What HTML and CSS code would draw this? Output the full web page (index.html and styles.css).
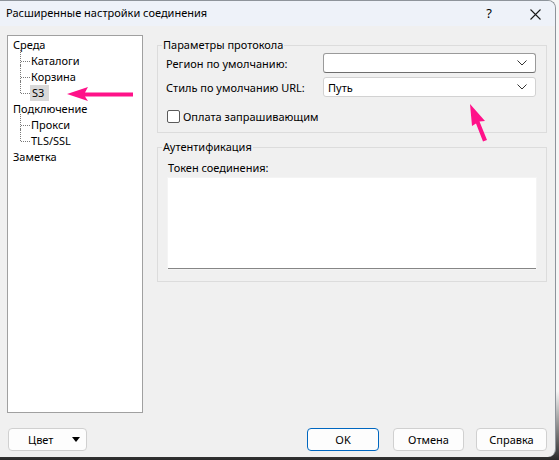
FILE: index.html
```html
<!DOCTYPE html>
<html>
<head>
    <title>Расширенные настройки соединения</title>
    <meta charset="UTF-8">
<link rel="stylesheet" href="styles.css">
</head>
<body>
<div class="window">
    <div class="titlebar">
        <span class="title">Расширенные настройки соединения</span>
        <span class="help">?</span>
        <svg class="close" width="11" height="11" viewBox="0 0 11 11">
            <path d="M0.5 0.5 L10.5 10.5 M10.5 0.5 L0.5 10.5" stroke="#1a1a1a" stroke-width="1.1" fill="none"/>
        </svg>
    </div>

    <div class="content">
        <div class="main">
            <!-- left tree -->
            <div class="tree">
                <ul class="tree-root">
                    <li><span class="node">Среда</span>
                        <ul class="tree-sub">
                            <li><span class="node">Каталоги</span></li>
                            <li><span class="node">Корзина</span></li>
                            <li><span class="node selected">S3</span></li>
                        </ul>
                    </li>
                    <li><span class="node">Подключение</span>
                        <ul class="tree-sub">
                            <li><span class="node">Прокси</span></li>
                            <li><span class="node">TLS/SSL</span></li>
                        </ul>
                    </li>
                    <li><span class="node">Заметка</span></li>
                </ul>
            </div>

            <!-- right panels -->
            <div class="panels">
                <fieldset class="group">
                    <legend>Параметры протокола</legend>
                    <div class="group-body protocol-body">
                        <div class="row">
                            <span class="label">Регион по умолчанию:</span>
                            <div class="combo combo-active">
                                <span class="combo-text"></span>
                                <svg class="chevron" width="10" height="6" viewBox="0 0 10 6"><path d="M0.5 0.5 L5 5 L9.5 0.5" stroke="#333" fill="none"/></svg>
                            </div>
                        </div>
                        <div class="row">
                            <span class="label">Стиль по умолчанию URL:</span>
                            <div class="combo">
                                <span class="combo-text">Путь</span>
                                <svg class="chevron" width="10" height="6" viewBox="0 0 10 6"><path d="M0.5 0.5 L5 5 L9.5 0.5" stroke="#333" fill="none"/></svg>
                            </div>
                        </div>
                        <label class="check-row">
                            <span class="checkbox"></span>
                            <span>Оплата запрашивающим</span>
                        </label>
                    </div>
                </fieldset>

                <fieldset class="group">
                    <legend>Аутентификация</legend>
                    <div class="group-body auth-body">
                        <div class="field-label">Токен соединения:</div>
                        <div class="textarea"></div>
                    </div>
                </fieldset>
            </div>
        </div>

        <div class="footer">
            <button class="btn btn-color">Цвет <span class="caret"></span></button>
            <div class="footer-right">
                <button class="btn btn-default">OK</button>
                <button class="btn">Отмена</button>
                <button class="btn">Справка</button>
            </div>
        </div>
    </div>

    <!-- annotation arrows -->
    <svg class="arrow arrow-s3" width="70" height="16" viewBox="0 0 70 16">
        <polygon points="0,7 21,0 18,5.5 66,5.5 66,9.5 18,9.5 21,14" fill="#ff1289"/>
    </svg>
    <svg class="arrow arrow-url" width="22" height="42" viewBox="0 0 22 42">
        <polygon points="1,1 16,18 10.5,18.5 18,37 14,38.5 7,20.5 3,23" fill="#ff1289"/>
    </svg>
</div>
</body>
</html>
```

FILE: styles.css
```css
/* Page */
html, body {
  margin: 0;
  padding: 0;
}

body {
  width: 559px;
  height: 460px;
  background: linear-gradient(to bottom, #f6f6f6 0, #f6f6f6 85%, #2a2a2a 100%);
  font-family: "Noto Sans", "Open Sans", sans-serif;
  font-size: 11px;
  color: #000;
  overflow: hidden;
}

/* Window frame */
.window {
  position: relative;
  width: 555px;
  height: 456px;
  background-color: #f0f0f0;
  border-top: 1px solid #8e949b;
  border-right: 1px solid #8e949b;
  border-radius: 0 8px 8px 0;
  display: flex;
  flex-direction: column;
  overflow: hidden;
}

/* Title bar */
.titlebar {
  height: 25px;
  background-color: #eef2f9;
  display: flex;
  align-items: center;
  padding-left: 6px;
}

.title {
  flex: 1;
  line-height: 16px;
  padding-bottom: 1px;
}

.help {
  font-size: 13px;
  margin-right: 38px;
  padding-bottom: 1px;
}

.close {
  margin-right: 14px;
  margin-top: 1px;
}

/* Content */
.content {
  flex: 1;
  display: flex;
  flex-direction: column;
  padding: 9px 8px 6px 7px;
}

.main {
  display: flex;
  gap: 14px;
  height: 378px;
}

/* Tree */
.tree {
  width: 134px;
  background-color: #fff;
  border: 1px solid #a0a0a0;
  padding-top: 1px;
}

.tree ul {
  list-style: none;
  margin: 0;
  padding: 0;
}

.tree li {
  line-height: 16px;
}

.tree-root > li > .node {
  margin-left: 4px;
}

.node {
  display: inline-block;
  vertical-align: top;
  height: 16px;
  line-height: 16px;
  padding: 0 1px;
}

.node.selected {
  background-color: #d9d9d9;
  padding: 0 5px 0 2px;
}

.tree-sub {
  margin-left: 12px !important;
}

.tree-sub li {
  position: relative;
  padding-left: 10px;
  height: 16px;
}

/* Dotted connectors */
.tree-sub li::before {
  content: "";
  position: absolute;
  left: 0;
  top: -4px;
  height: 20px;
  border-left: 1px dotted #7a7a7a;
}

.tree-sub li:first-child::before {
  top: -3px;
  height: 19px;
}

.tree-sub li:last-child::before {
  height: 12px;
}

.tree-sub li:first-child:last-child::before {
  height: 11px;
}

.tree-sub li::after {
  content: "";
  position: absolute;
  left: 1px;
  top: 8px;
  width: 9px;
  border-top: 1px dotted #7a7a7a;
}

/* Right panels */
.panels {
  flex: 1;
  display: flex;
  flex-direction: column;
  gap: 6px;
  padding-top: 2px;
}

.group {
  margin: 0;
  padding: 0;
  border: 1px solid #dcdcdc;
  border-radius: 0;
  min-width: 0;
}

.group legend {
  padding: 0 1px;
  margin-left: 4px;
  line-height: 16px;
}

.protocol-body {
  padding: 0 10px 6px 8px;
}

.row {
  display: flex;
  align-items: center;
  height: 20px;
  margin-bottom: 4px;
}

.label {
  width: 157px;
  flex-shrink: 0;
}

/* Combo boxes */
.combo {
  flex: 1;
  height: 18px;
  background-color: #fff;
  border: 1px solid #d2d2d2;
  border-radius: 3px;
  display: flex;
  align-items: center;
  padding: 0 8px 0 4px;
}

.combo-active {
  border-color: #9a9a9a;
  border-bottom-color: #6e6e6e;
}

.combo-text {
  flex: 1;
}

/* Checkbox */
.check-row {
  display: flex;
  align-items: center;
  gap: 3px;
  height: 20px;
  margin-top: 9px;
  padding-left: 1px;
}

.checkbox {
  width: 11px;
  height: 11px;
  border: 1px solid #5a5a5a;
  border-radius: 2px;
  background-color: #fff;
}

/* Auth group */
.auth-body {
  padding: 5px 10px 12px 10px;
}

.field-label {
  line-height: 16px;
  margin-bottom: 2px;
}

.textarea {
  height: 90px;
  background-color: #fff;
  border-bottom: 1px solid #868686;
  box-shadow: 0 0 0 1px #f4f4f4;
}

/* Footer buttons */
.footer {
  display: flex;
  justify-content: space-between;
  align-items: center;
  margin-top: 15px;
}

.footer-right {
  display: flex;
  gap: 12px;
}

.btn {
  height: 23px;
  width: 71px;
  background-color: #fdfdfd;
  border: 1px solid #d0d0d0;
  border-radius: 4px;
  font-family: inherit;
  font-size: 11px;
  color: #000;
  padding: 0;
}

.btn-default {
  width: 72px;
  border-color: #0067c0;
  margin-right: 2px;
}

.btn-color {
  width: 79px;
  margin-left: 1px;
  display: flex;
  align-items: center;
  padding-left: 19px;
}

.caret {
  margin-left: auto;
  margin-right: 6px;
  width: 0;
  height: 0;
  border-left: 4px solid transparent;
  border-right: 4px solid transparent;
  border-top: 5px solid #000;
}

/* Annotation arrows */
.arrow {
  position: absolute;
}

.arrow-s3 {
  left: 67px;
  top: 86px;
}

.arrow-url {
  left: 469px;
  top: 102px;
}
```
